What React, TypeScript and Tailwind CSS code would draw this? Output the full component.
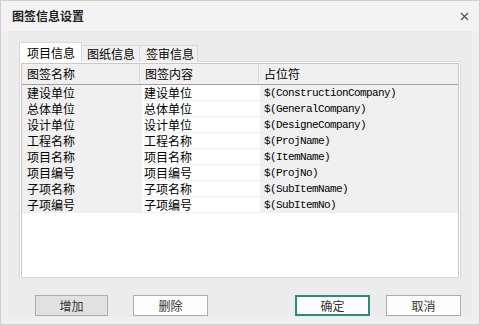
import React from "react";

const rows: [string, string, string][] = [
  ["建设单位", "建设单位", "$(ConstructionCompany)"],
  ["总体单位", "总体单位", "$(GeneralCompany)"],
  ["设计单位", "设计单位", "$(DesigneCompany)"],
  ["工程名称", "工程名称", "$(ProjName)"],
  ["项目名称", "项目名称", "$(ItemName)"],
  ["项目编号", "项目编号", "$(ProjNo)"],
  ["子项名称", "子项名称", "$(SubItemName)"],
  ["子项编号", "子项编号", "$(SubItemNo)"],
];

const cjk = { fontFamily: '"Noto Sans CJK SC", "Noto Sans", sans-serif' };
const mono = { fontFamily: '"Liberation Mono", "DejaVu Sans Mono", monospace' };

export default function App() {
  return (
    <div
      className="w-[480px] h-[325px] border border-[#cfcfcf] bg-[#f0f0f0] flex flex-col text-[12px] text-black overflow-hidden"
      style={cjk}
    >
      {/* title bar */}
      <div className="h-[30px] shrink-0 bg-[#f3f3f3] flex items-center justify-between pl-[11px] pr-[10px]">
        <span className="text-[12px] font-bold text-[#222] leading-none">图签信息设置</span>
        <svg width="9" height="9" viewBox="0 0 9 9">
          <path d="M1 1 L8 8 M8 1 L1 8" stroke="#555" strokeWidth="1.3" />
        </svg>
      </div>

      {/* body */}
      <div className="h-[286px] shrink-0 mx-[7px] bg-[#ececec] pt-[11px] px-[11px] flex flex-col">
        {/* tabs */}
        <div className="flex items-end h-[20px] relative z-10">
          <div className="w-[63px] h-[20px] bg-white border border-b-0 border-[#d9d9d9] flex items-center pl-[7px] leading-none">
            项目信息
          </div>
          <div className="w-[58px] h-[17px] bg-[#f0f0f0] border border-l-0 border-b-0 border-[#d9d9d9] flex items-center pl-[5px] leading-none">
            图纸信息
          </div>
          <div className="w-[58px] h-[17px] bg-[#f0f0f0] border border-l-0 border-b-0 border-[#d9d9d9] flex items-center pl-[6px] leading-none">
            签审信息
          </div>
        </div>

        {/* panel */}
        <div className="-mt-px h-[217px] bg-white border border-[#d9d9d9] p-px">
          <div className="h-full border border-b-0 border-[#c8c8c8] flex flex-col">
            {/* header */}
            <div className="h-[21px] shrink-0 bg-[#f0f0f0] border-b border-[#a0a0a0] flex leading-none">
              <div className="w-[118px] shrink-0 border-r border-[#d9d9d9] flex items-center pl-[5px]">图签名称</div>
              <div className="w-[119px] shrink-0 border-r border-[#d9d9d9] flex items-center pl-[5px]">图签内容</div>
              <div className="flex-1 flex items-center pl-[5px]">占位符</div>
            </div>
            {/* rows */}
            <div className="flex flex-col">
              {rows.map(([a, b, c]) => (
                <div key={a + c} className="h-[16px] flex leading-none">
                  <div className="w-[120px] shrink-0 bg-[#f0f0f0] flex items-center pl-[5px]">{a}</div>
                  <div className="w-[118px] shrink-0 bg-[#f0f0f0] flex pb-px">
                    <div className="flex-1 bg-white flex items-center pl-[2px]">{b}</div>
                  </div>
                  <div className="flex-1 bg-[#f0f0f0] flex items-center pl-[4px]">
                    <span className="text-[11px] tracking-[-0.6px]" style={mono}>{c}</span>
                  </div>
                </div>
              ))}
            </div>
          </div>
        </div>

        {/* buttons */}
        <div className="mt-[17px] h-[21px] flex text-[#333] leading-none">
          <button className="ml-[16px] w-[73px] h-[21px] bg-[#e1e1e1] border border-[#adadad] flex items-center justify-center">
            增加
          </button>
          <button className="ml-[25px] w-[75px] h-[21px] bg-[#fdfdfd] border border-[#adadad] flex items-center justify-center">
            删除
          </button>
          <div className="flex-1" />
          <button className="w-[75px] h-[21px] bg-[#fdfdfd] border-2 border-[#2e8b7c] flex items-center justify-center">
            确定
          </button>
          <button className="ml-[16px] w-[75px] h-[21px] bg-[#fdfdfd] border border-[#adadad] flex items-center justify-center">
            取消
          </button>
        </div>
      </div>
    </div>
  );
}
